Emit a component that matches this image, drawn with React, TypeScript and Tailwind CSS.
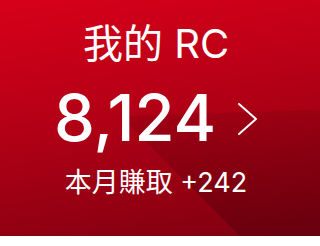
import React from 'react';

export default function App() {
  return (
    <div className="w-[320px] h-[246px] bg-white">
      <div className="relative h-[236px] overflow-hidden bg-[linear-gradient(170deg,#d8001a_0%,#b80016_40%,#7e0010_100%)]">
        {/* darker diagonal sheen, bottom right */}
        <div className="absolute inset-0 bg-[linear-gradient(180deg,rgba(50,0,6,0)_0%,rgba(50,0,6,0.12)_50%,rgba(50,0,6,0.3)_100%)] [clip-path:polygon(240px_236px,320px_236px,320px_110px,120px_116px)]" />
        <div
          className="relative flex flex-col items-center pr-2 text-white"
          style={{ fontFamily: 'Inter, "Noto Sans CJK TC", sans-serif' }}
        >
          <div className="mt-[18px] text-[40px] leading-[52px]">我的 RC</div>
          <div className="mt-[15px] flex items-center">
            <span className="text-[65px] leading-[66px] font-medium">8,124</span>
            <svg
              className="ml-[20px] mt-[2px]"
              width="22"
              height="34"
              viewBox="0 0 22 34"
              fill="none"
              stroke="white"
              strokeWidth="2"
              strokeLinecap="round"
              strokeLinejoin="round"
            >
              <path d="M3 2 L20 17 L3 32" />
            </svg>
          </div>
          <div className="mt-[16px] text-[27px] leading-[32px]">本月賺取 +242</div>
        </div>
      </div>
    </div>
  );
}
